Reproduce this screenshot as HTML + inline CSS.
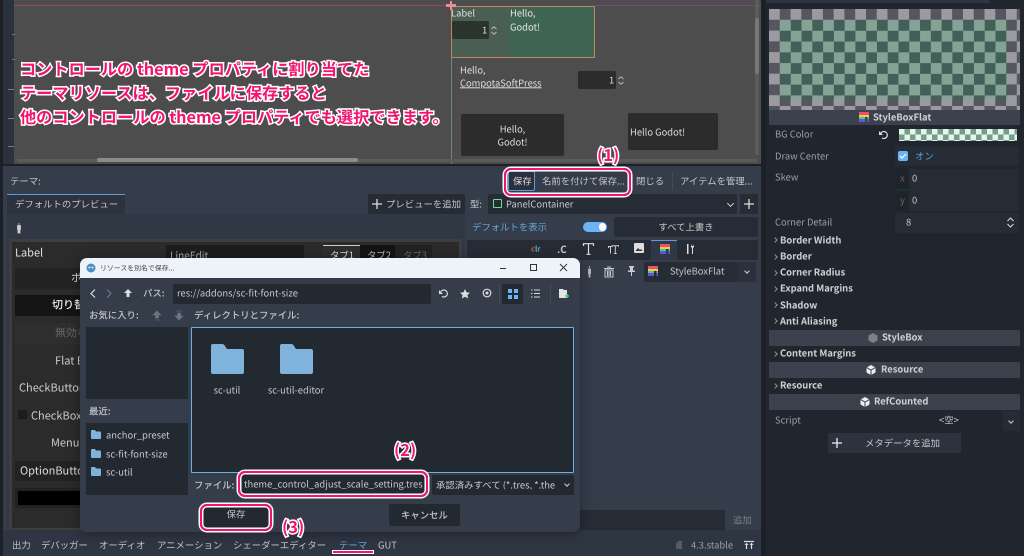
<!DOCTYPE html>
<html><head><meta charset="utf-8"><style>
*{box-sizing:border-box}
html,body{margin:0;padding:0;width:1024px;height:556px;overflow:hidden;background:#1c2128}
body{position:relative;font-family:"Noto Sans CJK JP","Liberation Sans",sans-serif;font-size:9.4px;color:#c4c6ca;text-rendering:geometricPrecision}
.b{position:absolute}
.t{position:absolute;transform:translateY(-50%);line-height:1;white-space:nowrap}
.bold{font-weight:700;color:#cfd1d4}
.an{font-weight:700;color:#f2146e;font-size:16.2px;-webkit-text-stroke:3px #fff;paint-order:stroke fill}
.num{font-weight:700;color:#f2146e;font-size:16.5px;-webkit-text-stroke:3px #fff;paint-order:stroke fill}
.pk{position:absolute;border:2px solid #f2146e;box-shadow:0 0 0 1.5px #fff,inset 0 0 0 1.5px #fff;border-radius:7px}
.hd{position:absolute;left:769px;width:251px;height:16px;background:#3c424d}
.arr{position:absolute;left:773px;width:4px;height:4px;border-top:1px solid #8a8e95;border-right:1px solid #8a8e95;transform:rotate(45deg)}
svg{position:absolute;overflow:visible}
.lb{color:#ccc;font-size:11px}
</style></head><body>

<!-- viewport -->
<div class="b" style="left:0;top:0;width:14px;height:164px;background:#2c323b"></div>
<div class="b" style="left:14px;top:0;width:747px;height:164px;background:#4d4d4d"></div>
<div class="b" style="left:0;top:0;width:3px;height:556px;background:#1c2128"></div>
<div class="b" style="left:14px;top:5px;width:437px;height:1px;background:#8d4a63"></div>
<div class="b" style="left:595px;top:5px;width:166px;height:1px;background:#7a4a80"></div>
<div class="b" style="left:12px;top:34px;width:3px;height:1px;background:#777"></div>
<div class="b" style="left:12px;top:59px;width:3px;height:1px;background:#777"></div>
<div class="b" style="left:8px;top:89px;width:6px;height:1px;background:#777"></div>
<div class="b" style="left:8px;top:118px;width:6px;height:1px;background:#777"></div>
<div class="b" style="left:8px;top:146px;width:6px;height:1px;background:#777"></div>
<div class="b" style="left:451px;top:57px;width:1px;height:107px;background:#6d8a72"></div>
<div class="b" style="left:451px;top:6px;width:144px;height:52px;background:#3f6653;border:1px solid #bd8a55"></div>
<div class="b" style="left:452px;top:7px;width:58px;height:50px;background:#4a5e54"></div>
<div class="b" style="left:446px;top:4px;width:10px;height:3px;background:#ef8a9a"></div>
<div class="b" style="left:450px;top:1px;width:2px;height:9px;background:#ef8a9a"></div>
<span class="t" style="left:451px;top:13px;color:#ddd">Label</span>
<div class="b" style="left:452px;top:21px;width:37px;height:18px;background:#2b342f;border-radius:2px"></div>
<span class="t" style="left:482px;top:30px;color:#ddd">1</span>
<svg style="left:491px;top:26px" width="6" height="9"><path d="M.5 3L3 .8 5.500 3M.5 6L3 8.200 5.500 6" fill="none" stroke="#bbb"/></svg>
<span class="t" style="left:510px;top:13px;color:#e4e4e4">Hello,</span>
<span class="t" style="left:510px;top:27px;color:#e4e4e4">Godot!</span>
<span class="t" style="left:460px;top:70px;color:#ddd">Hello,</span>
<span class="t" style="left:460px;top:83px;color:#ddd;text-decoration:underline">CompotaSoftPress</span>
<div class="b" style="left:578px;top:71px;width:38px;height:18px;background:#2c2c2c;border-radius:2px"></div>
<span class="t" style="left:609px;top:80px;color:#ddd">1</span>
<svg style="left:618px;top:76px" width="6" height="9"><path d="M.5 3L3 .8 5.500 3M.5 6L3 8.200 5.500 6" fill="none" stroke="#bbb"/></svg>
<div class="b" style="left:461px;top:114px;width:103px;height:42px;background:#2c2c2c;border-radius:2px"></div>
<span class="t" style="left:461px;width:103px;text-align:center;top:129px;color:#ddd">Hello,</span>
<span class="t" style="left:461px;width:103px;text-align:center;top:142px;color:#ddd">Godot!</span>
<div class="b" style="left:628px;top:113px;width:90px;height:37px;background:#2c2c2c;border-radius:2px"></div>
<span class="t" style="left:630px;top:132px;color:#ddd">Hello Godot!</span>
<div class="b" style="left:17px;top:159px;width:740px;height:3px;background:#5b5b5b"></div>
<div class="b" style="left:97px;top:158px;width:261px;height:4px;background:#8c8c8c;border-radius:2px"></div>
<div class="b" style="left:755px;top:0;width:4px;height:155px;background:#5b5b5b"></div>
<div class="b" style="left:755px;top:18px;width:4px;height:56px;background:#777;border-radius:2px"></div>

<span class="t an" style="left:20px;top:68px">コントロールの theme プロパティに割り当てた</span>
<span class="t an" style="left:20px;top:92px">テーマリソースは、ファイルに保存すると</span>
<span class="t an" style="left:20px;top:116px">他のコントロールの theme プロパティでも選択できます。</span>

<!-- bottom panel -->
<div class="b" style="left:3px;top:166px;width:758px;height:364px;background:#353c4a"></div>
<div class="b" style="left:3px;top:530px;width:758px;height:26px;background:#2f3643"></div>
<span class="t" style="left:10px;top:181px">テーマ:</span>
<div class="b" style="left:7px;top:194px;width:118px;height:20px;background:#2c333f;border-top:1px solid #5a9bd8"></div>
<span class="t" style="left:15px;top:204px">デフォルトのプレビュー</span>
<div class="b" style="left:7px;top:214px;width:458px;height:316px;background:#303846"></div>
<div class="b" style="left:368px;top:194px;width:97px;height:20px;background:#262c36;border-radius:2px"></div>
<svg style="left:372px;top:199px" width="10" height="10"><path d="M5 0v10M0 5h10" stroke="#ddd" stroke-width="1.300"/></svg>
<span class="t" style="left:386px;top:204px">プレビューを追加</span>
<svg style="left:15px;top:222px" width="8" height="12"><path d="M4 1v2M2.500 3.500h3v4h-3zM3 8h2v3H3z" fill="#ccc" stroke="#ccc" stroke-width=".8"/></svg>

<div class="b" style="left:508px;top:171px;width:27px;height:20px;border:1px solid #5a9bd8;border-radius:2px;background:#2a303b"></div>
<span class="t" style="left:513px;top:181px;color:#ddd">保存</span>
<span class="t" style="left:542px;top:181px">名前を付けて保存...</span>
<span class="t" style="left:636px;top:181px">閉じる</span>
<div class="b" style="left:672px;top:172px;width:1px;height:18px;background:#454c59"></div>
<span class="t" style="left:680px;top:181px">アイテムを管理...</span>
<span class="t" style="left:470px;top:204px">型:</span>
<div class="b" style="left:488px;top:194px;width:249px;height:20px;background:#262c36;border-radius:2px"></div>
<div class="b" style="left:493px;top:199px;width:9px;height:9px;border:1.500px solid #78d896;border-radius:1px"></div>
<span class="t" style="left:506px;top:204px">PanelContainer</span>
<div class="b" style="left:728px;top:201px;width:5px;height:5px;border-right:1px solid #ccc;border-bottom:1px solid #ccc;transform:rotate(45deg)"></div>
<div class="b" style="left:740px;top:194px;width:18px;height:20px;background:#262c36;border-radius:2px"></div>
<svg style="left:744px;top:199px" width="10" height="10"><path d="M5 0v10M0 5h10" stroke="#ddd" stroke-width="1.300"/></svg>
<span class="t" style="left:472px;top:227px;color:#63a8e0">デフォルトを表示</span>
<div class="b" style="left:583px;top:222px;width:24px;height:10px;background:#6cb4f5;border-radius:5px"></div>
<div class="b" style="left:599px;top:223px;width:7px;height:8px;background:#fff;border-radius:4px"></div>
<div class="b" style="left:614px;top:217px;width:144px;height:20px;background:#262c36;border-radius:2px"></div>
<span class="t" style="left:614px;width:144px;text-align:center;top:227px">すべて上書き</span>
<div class="b" style="left:467px;top:240px;width:291px;height:20px;background:#262c36"></div>
<div class="b" style="left:651px;top:240px;width:26px;height:20px;background:#303846;border-top:1px solid #5a9bd8"></div>
<span class="t" style="left:531px;top:249px;font-size:7.500px;font-weight:700;color:#d55">c<span style="color:#5c8">l</span><span style="color:#59d">r</span></span>
<span class="t" style="left:557px;top:249px;font-size:10px;font-weight:700">.C</span>
<svg style="left:583px;top:243px" width="11" height="12"><path d="M.5 3V.7h10V3M5.500 .7V11.300M3.500 11.300h4" fill="none" stroke="#ddd" stroke-width="1.200"/></svg>
<svg style="left:608px;top:245px" width="11" height="9"><path d="M.5 3V1.500h4M2.500 1.500V8.500M4 1.700V.7h6.500v1M7.300 .7v8M5.800 8.500h3" fill="none" stroke="#ccc"/></svg>
<svg style="left:634px;top:243px" width="10" height="10"><rect width="10" height="10" rx="1" fill="#ddd"/><path d="M1.500 8l2.500-3 2 2 1-1 1.500 2z" fill="#333"/></svg>
<svg style="left:660px;top:244px" width="10" height="10"><rect width="10" height="3" fill="#f04f6a"/><rect y="3" width="10" height="2" fill="#f0d040"/><rect y="5" width="10" height="2" fill="#40d080"/><rect y="7" width="10" height="3" fill="#6a50e0"/><rect x="6" y="5" width="2.500" height="5" fill="#303846"/></svg>
<svg style="left:686px;top:244px" width="9" height="10"><path d="M1 0v10h1.500V0zM5 0l.8 2h1.400L8 0v3.500H7v6.500H6V3.500H5z" fill="#ddd"/></svg>
<div class="b" style="left:644px;top:262px;width:112px;height:20px;background:#262c36;border-radius:2px"></div>
<div class="b" style="left:738px;top:262px;width:18px;height:20px;background:#2b313c"></div>
<svg style="left:648px;top:266px" width="10" height="10"><rect width="10" height="3" fill="#f04f6a"/><rect y="3" width="10" height="2" fill="#f0d040"/><rect y="5" width="10" height="2" fill="#40d080"/><rect y="7" width="10" height="3" fill="#6a50e0"/><rect x="6" y="5" width="2.500" height="5" fill="#262c36"/></svg>
<span class="t" style="left:670px;top:271px">StyleBoxFlat</span>
<div class="b" style="left:745px;top:269px;width:4px;height:4px;border-right:1px solid #ccc;border-bottom:1px solid #ccc;transform:rotate(45deg)"></div>
<svg style="left:586px;top:266px" width="9" height="11"><path d="M3.500 0v2M2.500 3h2v5h-2zM3 9h1v2H3z" stroke="#bbb" fill="#bbb" stroke-width=".8"/></svg>
<svg style="left:604px;top:266px" width="10" height="11"><path d="M3 1h4M0 2.500h10M1 4h8v7H1z" fill="none" stroke="#ccc"/><path d="M3.500 5v5M5 5v5M6.500 5v5" stroke="#ccc"/></svg>
<svg style="left:627px;top:266px" width="9" height="10"><path d="M2 0h5v1.500H6v3h2v1.500H1V4.500h2v-3H2zM4 6h1v4H4z" fill="#ccc"/></svg>

<!-- theme preview -->
<div class="b" style="left:9px;top:239px;width:453px;height:291px;background:#3e3e3e"></div>
<div class="b" style="left:12px;top:242px;width:447px;height:286px;background:#2b2b2b"></div>
<span class="t lb" style="left:15px;top:253px;color:#e0e0e0">Label</span>
<div class="b" style="left:166px;top:245px;width:138px;height:20px;background:#1d1d1d"></div>
<span class="t" style="left:170px;top:255px;color:#aaa;font-size:10px">LineEdit</span>
<div class="b" style="left:323px;top:245px;width:37px;height:20px;background:#2e2e2e;border-top:1px solid #ccc"></div>
<div class="b" style="left:360px;top:245px;width:35px;height:20px;background:#141414"></div>
<div class="b" style="left:395px;top:245px;width:37px;height:20px;background:#222"></div>
<span class="t" style="left:330px;top:255px;color:#ddd">タブ1</span>
<span class="t" style="left:367px;top:255px;color:#bbb">タブ2</span>
<span class="t" style="left:403px;top:255px;color:#666">タブ3</span>
<div class="b" style="left:15px;top:268px;width:150px;height:21px;background:#222"></div>
<span class="t lb" style="left:71px;top:278px;color:#ddd">ボタン</span>
<div class="b" style="left:15px;top:295px;width:150px;height:21px;background:#141414"></div>
<span class="t lb" style="left:52px;top:305px;color:#eee;font-weight:500">切り替え</span>
<div class="b" style="left:15px;top:323px;width:150px;height:21px;background:#2e2e2e"></div>
<span class="t lb" style="left:55px;top:333px;color:#666">無効なボタン</span>
<span class="t lb" style="left:55px;top:361px">Flat Button</span>
<span class="t lb" style="left:19px;top:388px">CheckButton</span>
<div class="b" style="left:18px;top:410px;width:9px;height:9px;background:#1c1c1c"></div>
<span class="t lb" style="left:31px;top:416px">CheckBox</span>
<span class="t lb" style="left:51px;top:443px">MenuButton</span>
<div class="b" style="left:15px;top:461px;width:150px;height:20px;background:#222"></div>
<span class="t lb" style="left:20px;top:471px;color:#ddd">OptionButton</span>
<div class="b" style="left:15px;top:488px;width:150px;height:20px;background:#222"></div>
<div class="b" style="left:18px;top:491px;width:140px;height:14px;background:#000"></div>

<div class="b" style="left:560px;top:510px;width:165px;height:20px;background:#262c36"></div>
<span class="t" style="left:733px;top:520px;color:#7a808a">追加</span>

<!-- status bar -->
<span class="t" style="left:12px;top:545px">出力</span>
<span class="t" style="left:41px;top:545px">デバッガー</span>
<span class="t" style="left:99px;top:545px">オーディオ</span>
<span class="t" style="left:157px;top:545px">アニメーション</span>
<span class="t" style="left:233px;top:545px">シェーダーエディター</span>
<span class="t" style="left:339px;top:545px;color:#63a8e0">テーマ</span>
<span class="t" style="left:378px;top:545px">GUT</span>
<div class="b" style="left:333px;top:551px;width:40px;height:2px;background:#f2146e;box-shadow:0 0 0 1px #fff"></div>
<svg style="left:675px;top:540px" width="9" height="10"><path d="M1 9V4q2-4 6-3v8z" fill="#565c66"/></svg>
<span class="t" style="left:691px;top:545px;color:#9a9fa8">4.3.stable</span>
<svg style="left:744px;top:541px" width="10" height="9"><path d="M0 .5h10M2.500 2v6M7.500 2v6" stroke="#ddd" stroke-width="1.200"/><path d="M.5 4l2-2 2 2M5.500 4l2-2 2 2" fill="#ddd"/></svg>

<!-- right dock -->
<div class="b" style="left:766px;top:0;width:258px;height:556px;background:#21262e"></div>
<div class="b" style="left:766px;top:0;width:224px;height:3px;background:#2e3542"></div>
<div class="b" style="left:769px;top:9px;width:251px;height:101px;background-color:#55565f;background-image:conic-gradient(#55565f 25%,#9a9a9f 0 50%,#55565f 0 75%,#9a9a9f 0);background-size:21.55px 21.55px"></div>
<div class="b" style="left:780px;top:19.800px;width:227px;height:79.200px;background-color:#41605a;background-image:conic-gradient(#41605a 25%,#85a395 0 50%,#41605a 0 75%,#85a395 0);background-size:21.55px 21.55px"></div>
<div class="b" style="left:769px;top:110px;width:251px;height:15px;background:#3c424d"></div>
<svg style="left:859px;top:112px" width="10" height="10"><rect width="10" height="3" fill="#f04f6a"/><rect y="3" width="10" height="2" fill="#f0d040"/><rect y="5" width="10" height="2" fill="#40d080"/><rect y="7" width="10" height="3" fill="#6a50e0"/><rect x="6" y="5" width="2.500" height="5" fill="#3c424d"/></svg>
<span class="t bold" style="left:873px;top:117px">StyleBoxFlat</span>
<span class="t" style="left:775px;top:134px;color:#9a9ea6">BG Color</span>
<svg style="left:879px;top:130px" width="10" height="10"><path d="M2 3a3.500 3.500 0 1 1 1 5" fill="none" stroke="#ddd" stroke-width="1.200"/><path d="M0 1v4h4z" fill="#ddd"/></svg>
<div class="b" style="left:899px;top:129px;width:118px;height:12px;background-color:#7a9a8c;background-image:conic-gradient(#7a9a8c 25%,#e2f7ec 0 50%,#7a9a8c 0 75%,#e2f7ec 0);background-size:11px 11px"></div>
<div class="b" style="left:895px;top:146px;width:124px;height:20px;background:#262c35"></div>
<div class="b" style="left:898px;top:151px;width:10px;height:10px;background:#6cb4f5;border-radius:2px"></div>
<svg style="left:898px;top:151px" width="10" height="10"><path d="M2 5l2 2 4-4" fill="none" stroke="#fff" stroke-width="1.200"/></svg>
<span class="t" style="left:915px;top:156px;color:#5b9fd8">オン</span>
<span class="t" style="left:775px;top:156px;color:#9a9ea6">Draw Center</span>
<span class="t" style="left:775px;top:177px;color:#9a9ea6">Skew</span>
<div class="b" style="left:895px;top:169px;width:124px;height:42px;background:#262c35"></div>
<div class="b" style="left:895px;top:169px;width:14px;height:20px;background:#1f242b"></div>
<div class="b" style="left:895px;top:191px;width:14px;height:20px;background:#1f242b"></div>
<span class="t" style="left:900px;top:178px;color:#7c5a4e">x</span>
<span class="t" style="left:900px;top:200px;color:#4c7a58">y</span>
<span class="t" style="left:912px;top:178px">0</span>
<span class="t" style="left:912px;top:200px">0</span>
<span class="t" style="left:775px;top:222px;color:#9a9ea6">Corner Detail</span>
<div class="b" style="left:895px;top:213px;width:124px;height:20px;background:#262c35"></div>
<span class="t" style="left:906px;top:222px">8</span>
<svg style="left:1007px;top:217px" width="7" height="11"><path d="M.5 4l3-3 3 3M.5 7l3 3 3-3" fill="none" stroke="#ddd"/></svg>

<div class="arr" style="top:238px"></div><span class="t bold" style="left:780px;top:240px">Border Width</span>
<div class="arr" style="top:255px"></div><span class="t bold" style="left:780px;top:256px">Border</span>
<div class="arr" style="top:271px"></div><span class="t bold" style="left:780px;top:272px">Corner Radius</span>
<div class="arr" style="top:287px"></div><span class="t bold" style="left:780px;top:288px">Expand Margins</span>
<div class="arr" style="top:303px"></div><span class="t bold" style="left:780px;top:305px">Shadow</span>
<div class="arr" style="top:319px"></div><span class="t bold" style="left:780px;top:321px">Anti Aliasing</span>
<div class="hd" style="top:330px"></div>
<svg style="left:868px;top:333px" width="10" height="10"><path d="M5 0l4.500 2.500v5L5 10 .5 7.500v-5z" fill="#7c8087"/></svg>
<span class="t bold" style="left:882px;top:337px">StyleBox</span>
<div class="arr" style="top:352px"></div><span class="t bold" style="left:780px;top:353px">Content Margins</span>
<div class="hd" style="top:362px"></div>
<svg style="left:866px;top:365px" width="10" height="10"><path d="M5 0l4.500 2.500v5L5 10 .5 7.500v-5z" fill="#eee"/><path d="M.5 2.500L5 5l4.500-2.500M5 5v5" stroke="#3c424d" fill="none"/></svg>
<span class="t bold" style="left:881px;top:369px">Resource</span>
<div class="arr" style="top:384px"></div><span class="t bold" style="left:780px;top:385px">Resource</span>
<div class="hd" style="top:394px"></div>
<svg style="left:860px;top:397px" width="10" height="10"><path d="M5 0l4.500 2.500v5L5 10 .5 7.500v-5z" fill="#eee"/><path d="M.5 2.500L5 5l4.500-2.500M5 5v5" stroke="#3c424d" fill="none"/></svg>
<span class="t bold" style="left:874px;top:401px">RefCounted</span>
<span class="t" style="left:775px;top:420px;color:#9a9ea6">Script</span>
<span class="t" style="left:939px;top:420px">&lt;空&gt;</span>
<div class="b" style="left:1003px;top:411px;width:17px;height:20px;background:#262c35"></div>
<div class="b" style="left:1009px;top:419px;width:4px;height:4px;border-right:1px solid #ccc;border-bottom:1px solid #ccc;transform:rotate(45deg)"></div>
<div class="b" style="left:828px;top:433px;width:133px;height:20px;background:#2d333e;border-radius:2px"></div>
<svg style="left:832px;top:438px" width="10" height="10"><path d="M5 0v10M0 5h10" stroke="#eee" stroke-width="1.300"/></svg>
<span class="t" style="left:865px;top:443px">メタデータを追加</span>

<!-- dialog -->
<div class="b" style="left:80px;top:258px;width:500px;height:274px;background:#353c4a;border-radius:7px;box-shadow:0 2px 12px rgba(0,0,0,.35)"></div>
<div class="b" style="left:80px;top:258px;width:500px;height:20px;background:#eef3fa;border-radius:7px 7px 0 0"></div>
<svg style="left:86px;top:263px" width="10" height="10"><circle cx="5" cy="5" r="4.500" fill="#4a8fc0"/><circle cx="3.500" cy="4.500" r="1" fill="#dfe"/><circle cx="6.500" cy="4.500" r="1" fill="#dfe"/></svg>
<span class="t" style="left:100px;top:268px;color:#444;font-size:6.900px">リソースを別名で保存...</span>
<div class="b" style="left:500px;top:268px;width:6px;height:1px;background:#333"></div>
<div class="b" style="left:530px;top:264px;width:7px;height:7px;border:1px solid #333"></div>
<svg style="left:560px;top:264px" width="7" height="7"><path d="M0 0l7 7M7 0L0 7" stroke="#333"/></svg>

<svg style="left:90px;top:289px" width="6" height="9"><path d="M5 .5L1 4.500l4 4" fill="none" stroke="#ddd" stroke-width="1.200"/></svg>
<svg style="left:106px;top:289px" width="6" height="9"><path d="M1 .5l4 4-4 4" fill="none" stroke="#7a808a"/></svg>
<svg style="left:124px;top:289px" width="8" height="9"><path d="M4 0L0 4h2.500v4h3V4H8z" fill="#ddd"/></svg>
<span class="t" style="left:143px;top:293px;font-weight:500">パス:</span>
<div class="b" style="left:173px;top:284px;width:258px;height:20px;background:#232931;border-radius:2px"></div>
<span class="t" style="left:177px;top:293px">res://addons/sc-fit-font-size</span>
<svg style="left:439px;top:289px" width="10" height="9"><path d="M2 2.500a3.500 3.500 0 1 1 1 5" fill="none" stroke="#ddd" stroke-width="1.200"/><path d="M0 1v4h4z" fill="#ddd"/></svg>
<svg style="left:460px;top:289px" width="10" height="10"><path d="M5 0l1.500 3.300 3.500.4-2.600 2.300.8 3.500L5 7.800 1.800 9.500l.8-3.500L0 3.700l3.500-.4z" fill="#ddd"/></svg>
<svg style="left:482px;top:288px" width="10" height="10"><circle cx="5" cy="5" r="3.800" fill="none" stroke="#ddd" stroke-width="1.200"/><circle cx="5" cy="5" r="1.500" fill="#ddd"/></svg>
<div class="b" style="left:499px;top:284px;width:1px;height:20px;background:#454c59"></div>
<div class="b" style="left:502px;top:284px;width:21px;height:20px;background:#232931;border-radius:2px"></div>
<svg style="left:508px;top:289px" width="10" height="10"><path d="M0 0h4v4H0zM6 0h4v4H6zM0 6h4v4H0zM6 6h4v4H6z" fill="#6cb4f5"/></svg>
<svg style="left:531px;top:289px" width="9" height="9"><path d="M0 1h1.500M3 1h6M0 4.500h1.500M3 4.500h6M0 8h1.500M3 8h6" stroke="#ddd"/></svg>
<div class="b" style="left:550px;top:284px;width:1px;height:20px;background:#454c59"></div>
<svg style="left:559px;top:289px" width="11" height="10"><path d="M0 0h4l1 1h3v8H0z" fill="#e4e4e4"/><path d="M8 5v4M6 7h4" stroke="#4fd06f" stroke-width="1.400"/></svg>

<span class="t" style="left:89px;top:315px;font-weight:500">お気に入り:</span>
<svg style="left:153px;top:311px" width="8" height="10"><path d="M4 0L0 4h2.500v3h3V4H8zM1 9h6" fill="#6e747f" stroke="#6e747f" stroke-width=".6"/></svg>
<svg style="left:175px;top:311px" width="8" height="10"><path d="M4 9L0 5h2.500V2h3v3H8zM1 0h6" fill="#6e747f" stroke="#6e747f" stroke-width=".6"/></svg>
<span class="t" style="left:194px;top:315px;font-weight:500">ディレクトリとファイル:</span>
<div class="b" style="left:86px;top:327px;width:102px;height:72px;background:#232931"></div>
<span class="t" style="left:89px;top:411px;font-weight:500">最近:</span>
<div class="b" style="left:86px;top:423px;width:102px;height:72px;background:#232931"></div>
<svg style="left:91px;top:430px" width="10" height="9"><path d="M0 1q0-1 1-1h3l1 1.500h4q1 0 1 1V8q0 1-1 1H1Q0 9 0 8z" fill="#7fb3dc"/></svg>
<span class="t" style="left:106px;top:435px">anchor_preset</span>
<svg style="left:91px;top:449px" width="10" height="9"><path d="M0 1q0-1 1-1h3l1 1.500h4q1 0 1 1V8q0 1-1 1H1Q0 9 0 8z" fill="#7fb3dc"/></svg>
<span class="t" style="left:106px;top:454px">sc-fit-font-size</span>
<svg style="left:91px;top:467px" width="10" height="9"><path d="M0 1q0-1 1-1h3l1 1.500h4q1 0 1 1V8q0 1-1 1H1Q0 9 0 8z" fill="#7fb3dc"/></svg>
<span class="t" style="left:106px;top:472px">sc-util</span>

<div class="b" style="left:191px;top:327px;width:383px;height:146px;background:#232931;border:1px solid #6fb0e0;border-radius:1px"></div>
<svg style="left:211px;top:344px" width="33" height="30"><path d="M0 2q0-2 2-2h9q2 0 3 2l2 3h15q2 0 2 2v21q0 2-2 2H2q-2 0-2-2z" fill="#80b3dc"/></svg>
<svg style="left:280px;top:344px" width="33" height="30"><path d="M0 2q0-2 2-2h9q2 0 3 2l2 3h15q2 0 2 2v21q0 2-2 2H2q-2 0-2-2z" fill="#80b3dc"/></svg>
<span class="t" style="left:177px;width:100px;text-align:center;top:390px">sc-util</span>
<span class="t" style="left:246px;width:100px;text-align:center;top:390px">sc-util-editor</span>

<span class="t" style="left:194px;top:485px;font-weight:500">ファイル:</span>
<div class="b" style="left:239px;top:472px;width:189px;height:23px;background:#232931;border-radius:6px"></div>
<span class="t" style="left:244px;top:484px">theme_control_adjust_scale_setting.tres</span>
<div class="pk" style="left:238px;top:470.500px;width:190px;height:26px"></div>
<div class="b" style="left:432px;top:475px;width:142px;height:20px;background:#232931;border-radius:2px;overflow:hidden"></div>
<span class="t" style="left:436px;top:485px;width:124px;overflow:hidden">承認済みすべて (*.tres, *.the</span>
<div class="b" style="left:565px;top:482px;width:4px;height:4px;border-right:1px solid #ccc;border-bottom:1px solid #ccc;transform:rotate(45deg)"></div>
<div class="b" style="left:201px;top:505px;width:70px;height:24px;background:#232931;border-radius:6px"></div>
<span class="t" style="left:201px;width:70px;text-align:center;top:514px">保存</span>
<div class="pk" style="left:199.500px;top:503.500px;width:72.500px;height:27.500px"></div>
<div class="b" style="left:389px;top:504px;width:71px;height:22px;background:#232931;border-radius:2px"></div>
<span class="t" style="left:389px;width:71px;text-align:center;top:515px;font-weight:500">キャンセル</span>

<!-- annotations -->
<div class="pk" style="left:503.500px;top:167.500px;width:127.500px;height:28px"></div>
<span class="t num" style="left:597px;top:154px">(1)</span>
<span class="t num" style="left:394px;top:449px">(2)</span>
<span class="t num" style="left:282px;top:526px">(3)</span>
</body></html>
